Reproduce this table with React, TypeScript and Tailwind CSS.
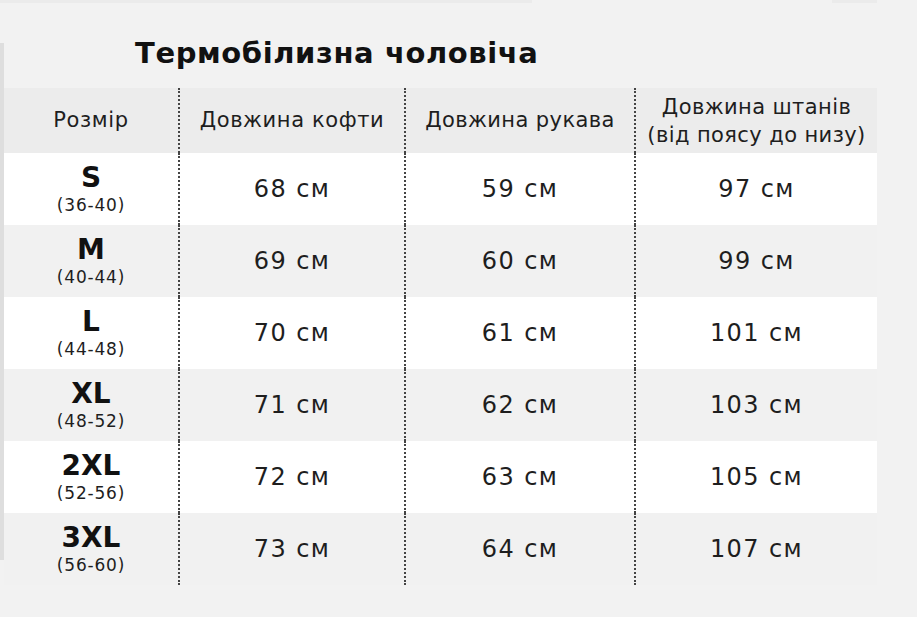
import React from "react";

const rows = [
  { size: "S", range: "(36-40)", a: "68 см", b: "59 см", c: "97 см" },
  { size: "M", range: "(40-44)", a: "69 см", b: "60 см", c: "99 см" },
  { size: "L", range: "(44-48)", a: "70 см", b: "61 см", c: "101 см" },
  { size: "XL", range: "(48-52)", a: "71 см", b: "62 см", c: "103 см" },
  { size: "2XL", range: "(52-56)", a: "72 см", b: "63 см", c: "105 см" },
  { size: "3XL", range: "(56-60)", a: "73 см", b: "64 см", c: "107 см" },
];

const font = { fontFamily: '"DejaVu Sans", "Noto Sans", sans-serif' };

export default function App() {
  return (
    <div
      className="w-[917px] h-[617px] bg-[#f2f2f2] text-[#1e1e1e] overflow-hidden relative"
      style={font}
    >
      <div className="absolute left-0 top-[43px] w-[4px] h-[517px] bg-[#dedede]" />
      <div className="h-[3px] flex">
        <div className="w-[532px] bg-[#ebebeb]" />
        <div className="w-[300px]" />
        <div className="w-[45px] bg-[#ebebeb]" />
      </div>
      <div className="h-[85px] pl-[135px] pt-[33px]">
        <h1 className="text-[29px] leading-[34px] font-bold tracking-[0.6px] text-[#111]">
          Термобілизна чоловіча
        </h1>
      </div>
      <div className="ml-[4px] w-[873px] grid grid-cols-[174px_226px_230px_243px]">
        <div className="h-[65px] bg-[#ececec] flex items-center justify-center text-[21px] tracking-[0.6px]">
          Розмір
        </div>
        <div className="h-[65px] bg-[#ececec] border-l-2 border-dotted border-[#444] flex items-center justify-center text-[21px] tracking-[0.6px]">
          Довжина кофти
        </div>
        <div className="h-[65px] bg-[#ececec] border-l-2 border-dotted border-[#444] flex items-center justify-center text-[21px] tracking-[0.4px]">
          Довжина рукава
        </div>
        <div className="h-[65px] bg-[#ececec] border-l-2 border-dotted border-[#444] flex flex-col items-center justify-center text-[21px] leading-[28px] tracking-[0.4px]">
          <span>Довжина штанів</span>
          <span>(від поясу до низу)</span>
        </div>
        {rows.map((r, i) => {
          const bg = i % 2 === 0 ? "bg-white" : "bg-[#f1f1f1]";
          return (
            <React.Fragment key={r.size}>
              <div className={`h-[72px] ${bg} flex flex-col items-center justify-center`}>
                <span className="text-[28px] leading-[28px] font-bold text-[#111]">{r.size}</span>
                <span className="text-[17px] leading-[20px] mt-[3px] tracking-[0.8px]">{r.range}</span>
              </div>
              <div className={`h-[72px] ${bg} border-l-2 border-dotted border-[#444] flex items-center justify-center text-[24px] tracking-[1.4px]`}>
                {r.a}
              </div>
              <div className={`h-[72px] ${bg} border-l-2 border-dotted border-[#444] flex items-center justify-center text-[24px] tracking-[1.4px]`}>
                {r.b}
              </div>
              <div className={`h-[72px] ${bg} border-l-2 border-dotted border-[#444] flex items-center justify-center text-[24px] tracking-[1.4px]`}>
                {r.c}
              </div>
            </React.Fragment>
          );
        })}
      </div>
    </div>
  );
}
